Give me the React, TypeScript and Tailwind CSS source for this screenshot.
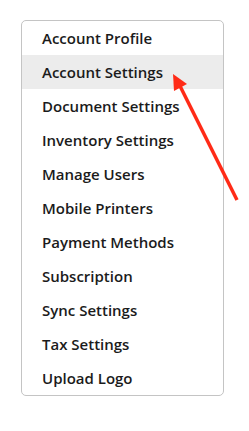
export default function App() {
  const items = [
    "Account Profile",
    "Account Settings",
    "Document Settings",
    "Inventory Settings",
    "Manage Users",
    "Mobile Printers",
    "Payment Methods",
    "Subscription",
    "Sync Settings",
    "Tax Settings",
    "Upload Logo",
  ];
  return (
    <div className="relative w-[249px] h-[431px] bg-white pt-[20px] pl-[21px]">
      <div className="w-[203px] border border-[#c4c4c4] rounded-[5px] overflow-hidden">
        {items.map((t, i) => (
          <div
            key={t}
            className={`h-[34px] flex items-center pl-[20px] text-[15px] font-semibold text-[#1b1b1b] ${i === 1 ? "bg-[#ececec]" : ""}`}
            style={{ fontFamily: '"Open Sans", sans-serif' }}
          >
            {t}
          </div>
        ))}
      </div>
      <svg className="absolute left-0 top-0" width="249" height="431" viewBox="0 0 249 431">
        <line x1="237" y1="200" x2="179" y2="84" stroke="#ff2b17" strokeWidth="3.5" />
        <polygon points="173,74 187,84 174,91" fill="#ff2b17" />
      </svg>
    </div>
  );
}
